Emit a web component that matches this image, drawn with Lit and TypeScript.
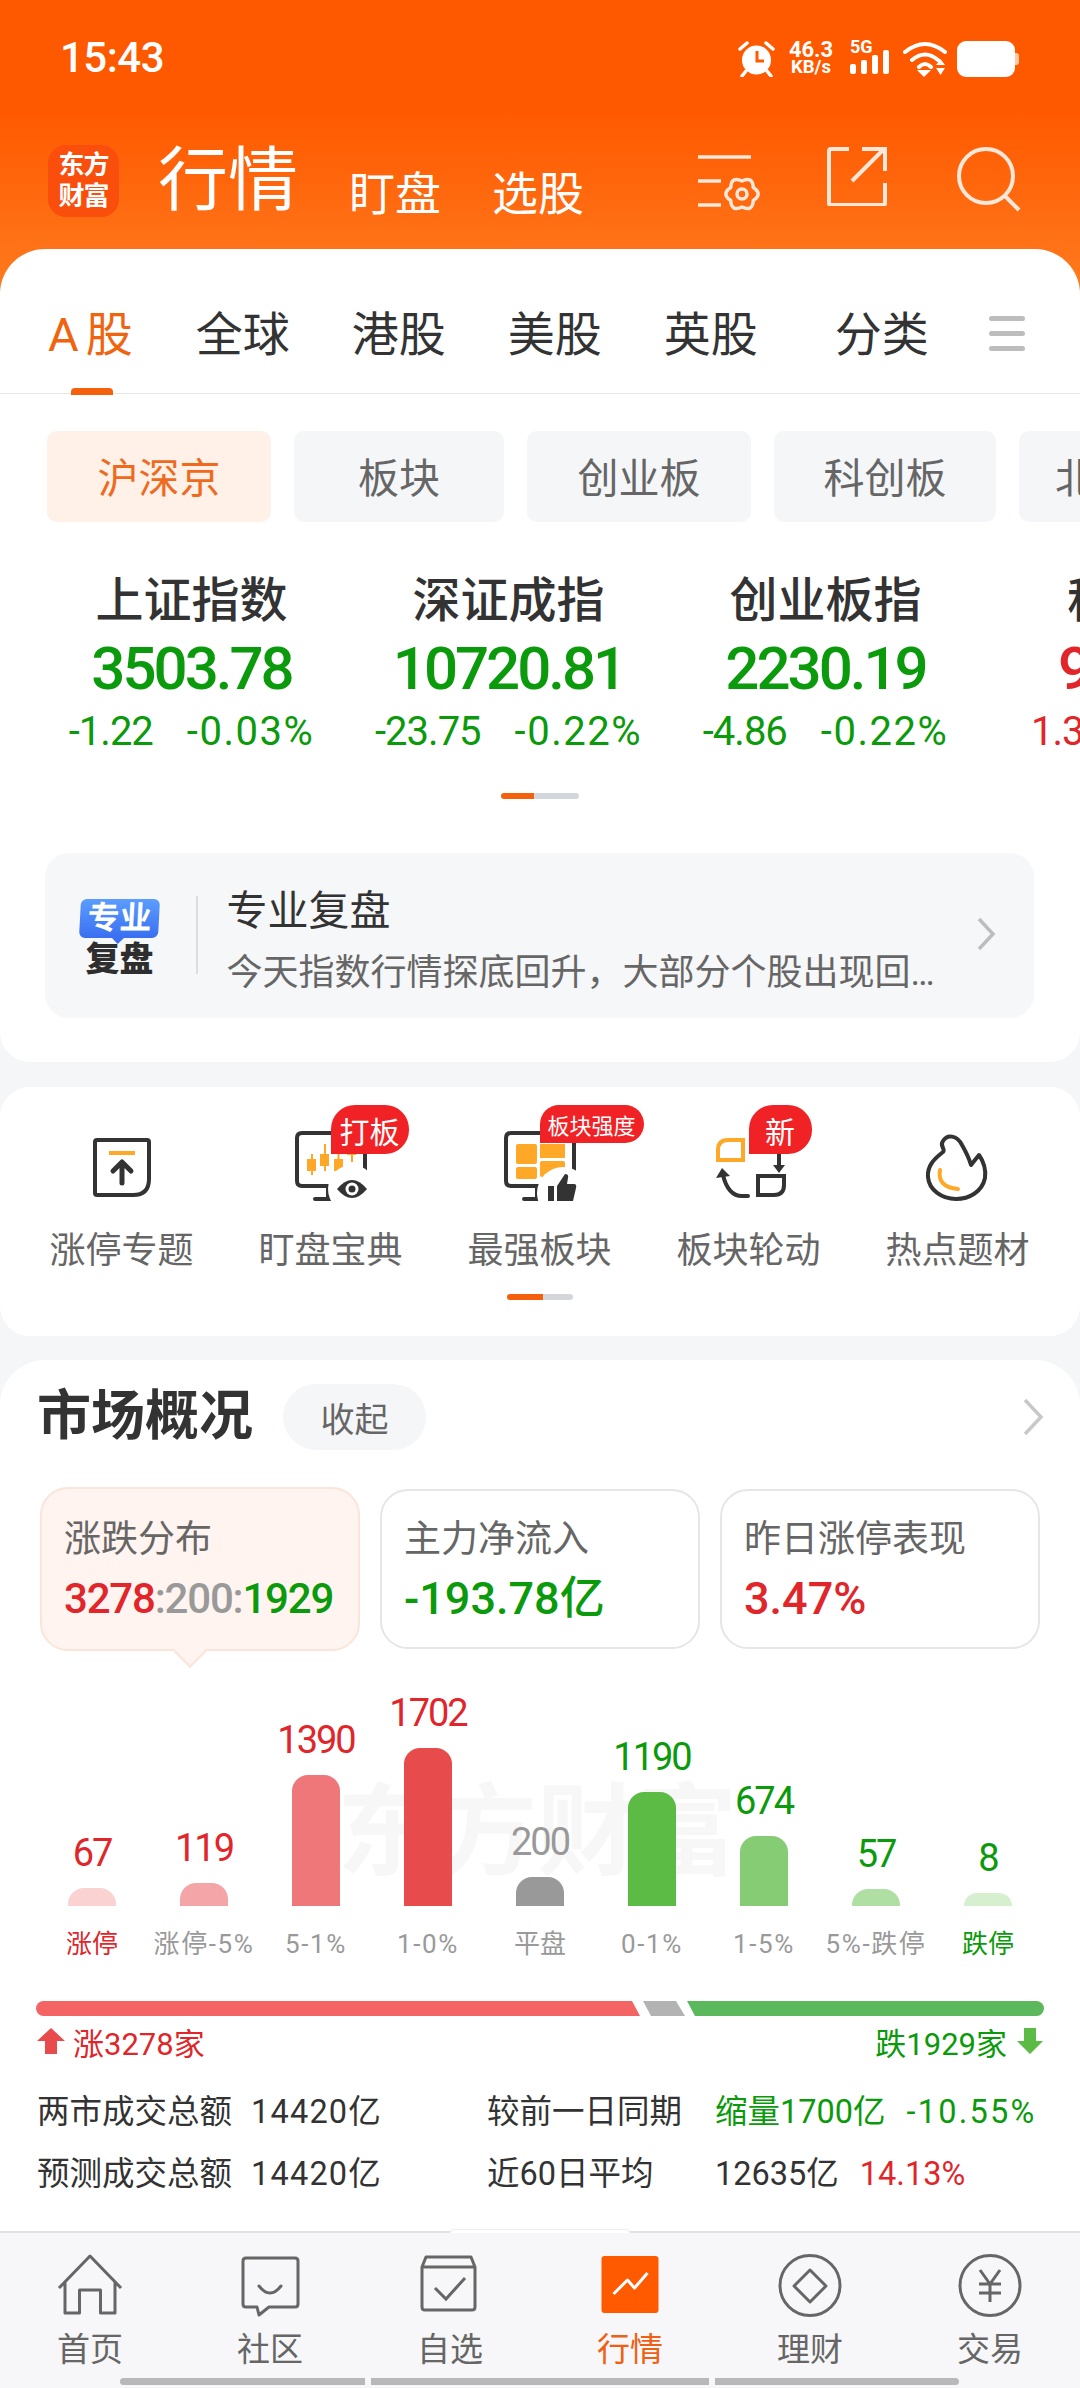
import { LitElement, html, css, svg } from "lit";
import { customElement } from "lit/decorators.js";

const gearPath = (cx: number, cy: number, rIn: number, rOut: number, n = 6) => {
  let d = "";
  for (let i = 0; i < n; i++) {
    const a0 = (i / n) * Math.PI * 2 - Math.PI / 2;
    const a1 = ((i + 1) / n) * Math.PI * 2 - Math.PI / 2;
    const am = (a0 + a1) / 2;
    const p = (a: number, r: number) => `${(cx + Math.cos(a) * r).toFixed(1)},${(cy + Math.sin(a) * r).toFixed(1)}`;
    if (i === 0) d += `M${p(a0, rIn)}`;
    d += `Q${p(am, rOut)} ${p(a1, rIn)}`;
  }
  return d + "Z";
};

const bars = [
  { v: "67", h: 18, c: "#FBD2D2", t: "r", l: "涨停", lc: "r" },
  { v: "119", h: 23, c: "#F4A5A7", t: "r", l: "涨停-5%", lc: "ln" },
  { v: "1390", h: 131, c: "#EF7779", t: "r", l: "5-1%", lc: "ln" },
  { v: "1702", h: 158, c: "#E84B4B", t: "r", l: "1-0%", lc: "ln" },
  { v: "200", h: 29, c: "#999999", t: "n", l: "平盘", lc: "" },
  { v: "1190", h: 114, c: "#5CBB45", t: "g", l: "0-1%", lc: "ln" },
  { v: "674", h: 70, c: "#85CC75", t: "g", l: "1-5%", lc: "ln" },
  { v: "57", h: 17, c: "#AFDFA2", t: "g", l: "5%-跌停", lc: "ln" },
  { v: "8", h: 13, c: "#D5EFCF", t: "g", l: "跌停", lc: "g" },
];

const indices = [
  { n: "上证指数", p: "3503.78", a: "-1.22", b: "-0.03%", c: "g" },
  { n: "深证成指", p: "10720.81", a: "-23.75", b: "-0.22%", c: "g" },
  { n: "创业板指", p: "2230.19", a: "-4.86", b: "-0.22%", c: "g" },
  { n: "科创50", p: "985.16", a: "1.36", b: "0.14%", c: "r" },
];

const iconUp = svg`
  <path d="M40,35 H90 Q92,35 92,37 V74 Q92,90 76,90 H40 Q38,90 38,88 V37 Q38,35 40,35 Z" fill="none" stroke="#333" stroke-width="4"/>
  <path d="M52,48 H78" stroke="#FFA726" stroke-width="4"/>
  <path d="M65,78 V58 M56,66 L65,57 L74,66" fill="none" stroke="#333" stroke-width="5" stroke-linecap="round" stroke-linejoin="round"/>`;

const monitor = svg`
  <path d="M104,28 H36 Q31,28 31,33 V76 Q31,81 36,81 H100" fill="none" stroke="#333" stroke-width="4"/>
  <path d="M99,28 V81" stroke="#333" stroke-width="4"/>
  <path d="M62,81 V94 M49,94 H76" fill="none" stroke="#333" stroke-width="4" stroke-linecap="round"/>`;

const iconWatch = svg`
  ${monitor}
  <g fill="#FFA726">
    <rect x="41" y="54" width="9" height="12"/><rect x="45" y="49" width="2" height="21"/>
    <rect x="54" y="49" width="9" height="12"/><rect x="58" y="39" width="2" height="27"/>
    <rect x="68" y="54" width="9" height="12"/><rect x="71.5" y="48" width="2" height="23"/>
    <rect x="81" y="45" width="9" height="5"/><rect x="85" y="45" width="2" height="12"/>
  </g>
  <circle cx="86" cy="84" r="24" fill="#fff"/>
  <path d="M71,84 Q86,66 101,84 Q86,102 71,84 Z" fill="#333"/>
  <circle cx="86" cy="84" r="6.5" fill="#fff"/><circle cx="86" cy="84" r="3.5" fill="#333"/>`;

const iconStrong = svg`
  ${monitor}
  <g fill="#FFA726">
    <rect x="41" y="39" width="21" height="20" rx="2"/><rect x="41" y="62" width="21" height="12" rx="2"/>
    <rect x="65" y="39" width="25" height="14"/><rect x="65" y="56" width="25" height="16" rx="2"/>
  </g>
  <circle cx="88" cy="88" r="26" fill="#fff"/>
  <path d="M73,81 H79 V96 H73 Z M82,81 L90,69 Q94,69 93,73 L92,79 H99 Q102,79 101,83 L98,96 H82 Z" fill="#333"/>`;

const iconRotate = svg`
  <path d="M44,35 H59 V55 H34 V45 Q34,35 44,35 Z" fill="none" stroke="#FFA726" stroke-width="4"/>
  <path d="M74,71 H100 V80 Q100,90 90,90 H74 Z" fill="none" stroke="#333" stroke-width="4"/>
  <path d="M95,48 V60" stroke="#333" stroke-width="4"/>
  <path d="M89,60 H101 L95,68 Z" fill="#333"/>
  <path d="M64,91 H58 Q44,91 39,70" fill="none" stroke="#333" stroke-width="4" stroke-linecap="round"/>
  <path d="M32,73 L38,63 L46,71 Z" fill="#333"/>`;

const iconFlame = svg`
  <path d="M50,36 C54,29 64,30 69,40 C73,47 76,53 78,60 L86,50 C91,57 93,65 92,73 C89,87 76,94 63,94 C49,94 36,85 35,72 C34,61 41,54 50,47 C53,44 46,41 50,36 Z" fill="none" stroke="#333" stroke-width="4" stroke-linejoin="round"/>
  <path d="M47,65 Q44,82 65,84" fill="none" stroke="#FFA726" stroke-width="4" stroke-linecap="round"/>`;

const tools = [
  { i: iconUp, l: "涨停专题", b: "" },
  { i: iconWatch, l: "盯盘宝典", b: "打板", k: "a" },
  { i: iconStrong, l: "最强板块", b: "板块强度", k: "b" },
  { i: iconRotate, l: "板块轮动", b: "新", k: "c" },
  { i: iconFlame, l: "热点题材", b: "" },
];

const tabIcons = [
  { l: "首页", i: svg`<path d="M4,35 L35,3 L66,35 M10,28 V60 H24.5 V37 H45.5 V60 H60 V28" fill="none" stroke="#666" stroke-width="3" stroke-linejoin="round"/>` },
  { l: "社区", i: svg`<path d="M11,5 H60 Q63,5 63,8 V51 Q63,54 60,54 H34 L24,62 L22,54 H11 Q8,54 8,51 V8 Q8,5 11,5 Z" fill="none" stroke="#666" stroke-width="3" stroke-linejoin="round"/><path d="M24,33 Q35,47 46,33" fill="none" stroke="#666" stroke-width="3" stroke-linecap="round"/>` },
  { l: "自选", i: svg`<path d="M7,14 L11,4 H56 L60,14 V54 Q60,57 57,57 H10 Q7,57 7,54 Z M7,14 H60" fill="none" stroke="#666" stroke-width="3" stroke-linejoin="round"/><path d="M20,35 L31,46 L50,25" fill="none" stroke="#666" stroke-width="3"/>` },
  { l: "行情", on: true, i: svg`<rect x="6.5" y="3" width="57" height="57" rx="3" fill="#FF5A00"/><path d="M18.5,41 L32.5,27 L39.5,35 L52.5,20" fill="none" stroke="#fff" stroke-width="3" stroke-linejoin="round"/>` },
  { l: "理财", i: svg`<circle cx="35" cy="32.5" r="30" fill="none" stroke="#666" stroke-width="3"/><path d="M35,17 L51,33 L35,49 L19,33 Z" fill="none" stroke="#666" stroke-width="3" stroke-linejoin="round"/>` },
  { l: "交易", i: svg`<circle cx="35" cy="32.5" r="30" fill="none" stroke="#666" stroke-width="3"/><path d="M25,17 L35,31 L45,17 M24,31 H46 M24,40 H46 M35,31 V49" fill="none" stroke="#666" stroke-width="3"/>` },
];

@customElement("app-root")
export class AppRoot extends LitElement {
  static styles = css`
    :host { display: block; width: 1080px; height: 2388px; font-family: Roboto, "Noto Sans CJK SC", sans-serif; color: #333; }
    * { box-sizing: border-box; }
    svg { display: block; flex: none; }
    .app { width: 1080px; height: 2388px; display: flex; flex-direction: column; overflow: hidden; background: #F5F6F8; }
    .scroll { flex: 1; min-height: 0; overflow: hidden; background: linear-gradient(#FF5900 0, #FF5900 110px, #FF7A1E 290px) 0 0 / 100% 300px no-repeat, #F5F6F8; }

    .status { height: 119px; display: flex; align-items: flex-start; padding: 38px 60px 0 60px; color: #fff; }
    .time { font-size: 42px; font-weight: 500; line-height: 40px; width: 678px; letter-spacing: -0.5px; }
    .alarm { margin-top: 3px; margin-left: 0; }
    .speed { width: 50px; margin-left: 11px; margin-top: 2px; text-align: center; font-weight: 700; white-space: nowrap; }
    .speed div:first-child { font-size: 22px; line-height: 19px; }
    .speed div:last-child { font-size: 18.5px; line-height: 17px; }
    .sig { width: 42px; margin-left: 14px; margin-top: 2px; }
    .sig span { display: block; font-size: 18px; font-weight: 700; line-height: 14px; }
    .sig svg { margin-top: -4px; }
    .wifi { margin-left: 11px; margin-top: 3px; }
    .batt { margin-left: 10px; margin-top: 3px; }

    .nav { height: 130px; display: flex; align-items: flex-start; padding-left: 48px; color: #fff; }
    .logo { width: 71px; height: 72px; margin-top: 26px; border-radius: 18px; background: #F94E0C; font-size: 26px; font-weight: 700; line-height: 31px; text-align: center; padding-top: 5px; letter-spacing: -1px; }
    .hq { font-size: 70px; line-height: 80px; margin-left: 39px; margin-top: 22px; }
    .sub-nav { font-size: 46px; line-height: 56px; margin-top: 47px; }
    .sub-nav.a { margin-left: 51px; }
    .sub-nav.b { margin-left: 51px; }
    .nav-ic { margin-top: 27px; }
    .nav-ic.a { margin-left: 113px; }
    .nav-ic.b { margin-left: 66px; }
    .nav-ic.c { margin-left: 69px; }

    .card { background: #fff; border-radius: 30px; overflow: hidden; }
    .market { border-radius: 45px 45px 30px 30px; padding-bottom: 44px; }
    .tabs { height: 145px; display: flex; align-items: flex-start; padding: 62px 0 0 48px; border-bottom: 1.5px solid #E6E6E6; position: relative; font-size: 47px; line-height: 48px; }
    .tabs span { margin-right: 62px; }
    .tabs .on { color: #F0640F; position: relative; margin-right: 56px; letter-spacing: 7px; }
    .tabs .on::after { content: ""; position: absolute; left: 23px; top: 77px; width: 42px; height: 7px; border-radius: 4px 4px 0 0; background: #F4600C; }
    .tabs .last { margin-left: 15px; margin-right: 60px; }
    .menu { display: flex; flex-direction: column; gap: 10px; width: 36px; margin-top: 5px; }
    .menu i { display: block; height: 5px; border-radius: 3px; background: #BDBDBD; }

    .chips { display: flex; gap: 23px; padding: 37px 0 0 47px; overflow: hidden; white-space: nowrap; }
    .chip { flex: none; height: 91px; border-radius: 10px; background: #F5F6F8; color: #666; font-size: 41px; display: flex; align-items: center; justify-content: center; padding-bottom: 4px; }
    .chip.on { background: #FFF0E8; color: #EE6A1E; }

    .idx { display: flex; padding: 50px 0 0 33px; width: 1080px; overflow: hidden; }
    .col { flex: none; width: 317px; display: flex; flex-direction: column; align-items: center; white-space: nowrap; }
    .col .n { font-size: 48px; line-height: 58px; font-weight: 500; }
    .col .p { font-size: 60px; line-height: 68px; margin-top: 5px; font-weight: 500; letter-spacing: -3px; }
    .col .s { display: flex; gap: 34px; font-size: 40px; line-height: 44px; margin-top: 7px; }
    .col .s span:first-child { letter-spacing: -1px; }
    .col .s span:last-child { letter-spacing: 1.5px; }
    .g { color: #0B9A0B; }
    .r { color: #E0262A; }
    .n0 { color: #999; }

    .dots { display: flex; justify-content: center; margin-top: 39px; }
    .dots.sm { margin-top: 21px; }
    .dots i { display: block; height: 6px; }
    .dots .o { background: #F4600C; border-radius: 3px 0 0 3px; }
    .dots .y { background: #D3D6DA; border-radius: 0 3px 3px 0; }
    .dots .w33 { width: 33px; } .dots .w45 { width: 45px; } .dots .w36 { width: 36px; } .dots .w30 { width: 30px; }

    .review { margin: 54px 46px 0 45px; height: 165px; border-radius: 24px; background: #F6F7F9; display: flex; align-items: flex-start; padding-left: 35px; position: relative; }
    .rlogo { width: 79px; margin-top: 46px; text-align: center; }
    .bubble { height: 39px; border-radius: 6px; background: linear-gradient(#5C9DFF, #3A6FF0); color: #fff; font-size: 32px; font-weight: 700; line-height: 38px; position: relative; transform: skewX(-3deg); }
    .bubble::after { content: ""; position: absolute; left: 33px; top: 39px; border: 6px solid transparent; border-top-color: #3A6FF0; border-bottom: 0; }
    .rlogo .fp { font-size: 34px; line-height: 36px; font-weight: 900; margin-top: 3px; color: #2E2E2E; white-space: nowrap; }
    .rdiv { width: 1.5px; height: 78px; background: #DDDDE0; margin: 43px 29px 0 37px; }
    .rtext { padding-top: 33px; white-space: nowrap; }
    .rtext .t { font-size: 41px; line-height: 50px; }
    .rtext .d { font-size: 36px; line-height: 50px; margin-top: 12px; color: #666; }
    .rchev { margin-left: auto; margin-right: 38px; margin-top: 64px; }

    .toolcard { margin-top: 25px; height: 249px; padding-top: 18px; }
    .tools { display: grid; grid-template-columns: repeat(5, 209px); padding-left: 17px; }
    .tool { display: flex; flex-direction: column; align-items: center; }
    .ticon { position: relative; width: 130px; height: 96px; }
    .badge { position: absolute; top: 0; background: #F02226; color: #fff; display: flex; align-items: center; justify-content: center; border-radius: 24px 24px 24px 0; white-space: nowrap; }
    .badge.a { left: 65px; width: 78px; height: 49px; font-size: 30px; }
    .badge.b { left: 65px; width: 104px; height: 38px; font-size: 22px; border-radius: 19px 19px 19px 0; }
    .badge.c { left: 65px; width: 63px; height: 49px; font-size: 30px; }
    .tool .l { font-size: 36px; line-height: 44px; margin-top: 28px; color: #666; white-space: nowrap; }

    .overview { margin-top: 24px; border-radius: 45px 45px 0 0; height: 900px; }
    .ohead { display: flex; align-items: center; padding: 24px 0 0 37px; height: 90px; }
    .ohead h2 { margin: 0; font-size: 54px; font-weight: 700; line-height: 66px; }
    .pill { margin-left: 30px; width: 143px; height: 66px; border-radius: 33px; background: #F5F6F8; color: #666; font-size: 34px; display: flex; align-items: center; justify-content: center; }
    .ochev { margin-left: auto; margin-right: 36px; }
    .mtabs { display: grid; grid-template-columns: repeat(3, 1fr); gap: 20px; padding: 0 40px; margin-top: 37px; align-items: center; }
    .mtab { height: 160px; border: 2px solid #E6E6E8; border-radius: 28px; padding: 27px 0 0 22px; white-space: nowrap; position: relative; }
    .mtab.on { height: 164px; padding-top: 29px; background: #FFF4EF; border-color: #FBE4D9; }
    .mtab.on::after { content: ""; position: absolute; left: 136px; bottom: -14px; width: 22px; height: 22px; background: #FFF4EF; border-right: 2px solid #FBE4D9; border-bottom: 2px solid #FBE4D9; transform: rotate(45deg); }
    .mtab .lb { font-size: 37px; line-height: 44px; color: #666; }
    .mtab .vl { font-size: 45px; line-height: 50px; margin-top: 12px; font-weight: 500; }
    .mtab.on .vl { font-size: 42px; letter-spacing: -1.2px; font-weight: 500; }

    .chartwrap { position: relative; margin-top: 39px; }
    .wm { position: absolute; left: 337px; top: 83px; font-size: 100px; line-height: 120px; color: #F7F7F7; font-weight: 700; white-space: nowrap; }
    .chart, .labels { display: grid; grid-template-columns: repeat(9, 112px); padding: 0 36px; position: relative; }
    .chart { height: 216px; align-items: end; }
    .bc { display: flex; flex-direction: column; align-items: center; }
    .bc .v { font-size: 38px; line-height: 44px; margin-bottom: 13px; letter-spacing: -2px; }
    .bc .b { width: 48px; border-radius: 16px 16px 0 0; }
    .labels { margin-top: 20px; font-size: 26px; line-height: 36px; color: #999; text-align: center; white-space: nowrap; }
    .labels .ln { letter-spacing: 1.6px; }

    .prog { display: flex; margin: 39px 36px 0; height: 15px; }
    .prog i { display: block; height: 15px; }
    .prog .pr { width: 604px; background: #F46464; border-radius: 8px 0 0 8px; clip-path: polygon(0 0, calc(100% - 8px) 0, 100% 100%, 0 100%); }
    .prog .pn { width: 42px; margin-left: 3px; background: #B3B3B3; clip-path: polygon(0 0, calc(100% - 9px) 0, 100% 100%, 8px 100%); }
    .prog .pg { width: 357px; margin-left: 2px; background: #5CB85C; border-radius: 0 8px 8px 0; clip-path: polygon(0 0, 100% 0, 100% 100%, 8px 100%); }

    .updown { display: flex; align-items: center; padding: 0 37px; margin-top: 5px; height: 40px; font-size: 31px; }
    .updown .sp { flex: 1; }
    .updown svg.u { margin-right: 8px; }
    .updown svg.d { margin-left: 10px; }

    .stat { display: grid; grid-template-columns: 214px 236px 228px auto; padding-left: 37px; font-size: 32.5px; line-height: 44px; white-space: nowrap; }
    .stat.first { margin-top: 29px; }
    .stat.second { margin-top: 18px; }
    .stat .x { display: flex; gap: 21px; }
    .stat .w { letter-spacing: 1.2px; }
    .stat .pc { letter-spacing: 2.2px; }

    .tabbar { flex: none; height: 157px; background: #F7F7F9; border-top: 2px solid #E2E2E2; position: relative; padding-top: 20px; }
    .notch { position: absolute; left: 450px; top: -4px; width: 180px; height: 4px; border: 1px solid #EEE; border-bottom: 0; border-radius: 8px 8px 0 0; background: #fff; }
    .tbi { display: grid; grid-template-columns: repeat(6, 180px); }
    .tb { display: flex; flex-direction: column; align-items: center; color: #666; font-size: 33px; line-height: 40px; }
    .tb span { margin-top: 11px; }
    .tb.on { color: #EE6012; }
    .sb { display: flex; gap: 6px; margin: 8px 0 0 120px; }
    .sb i { display: block; height: 7px; background: #B8B8B8; }
    .sb .a { width: 245px; border-radius: 4px 0 0 4px; }
    .sb .b { width: 338px; }
    .sb .c { width: 244px; border-radius: 0 4px 4px 0; }
  `;

  render() {
    return html`
      <div class="app">
        <div class="scroll">
          <div class="status">
            <div class="time">15:43</div>
            <svg class="alarm" width="37" height="36" viewBox="0 0 37 36">
              <circle cx="18.5" cy="19" r="14.5" fill="#fff"/>
              <path d="M19,10 V20 H26" fill="none" stroke="#FF5A00" stroke-width="3"/>
              <path d="M2,8 L9,2 M35,8 L28,2 M8,30 L4,35 M29,30 L33,35" stroke="#fff" stroke-width="3.5" stroke-linecap="round"/>
            </svg>
            <div class="speed"><div>46.3</div><div>KB/s</div></div>
            <div class="sig"><span>5G</span>
              <svg width="40" height="24" viewBox="0 0 40 24" fill="#fff"><rect x="0" y="14" width="6" height="10" rx="2"/><rect x="11" y="10" width="6" height="14" rx="2"/><rect x="22" y="5" width="6" height="19" rx="2"/><rect x="33" y="0" width="6" height="24" rx="2"/></svg>
            </div>
            <svg class="wifi" width="44" height="36" viewBox="0 0 44 36">
              <path d="M2,11 Q22,-5 42,11 M9,19 Q22,8 35,19 M16,26 Q22,20 28,26" fill="none" stroke="#fff" stroke-width="4" stroke-linecap="round"/>
              <path d="M14,29 H28 L21,36 Z M33,24 H42 L37.5,18 Z M33,27 H42 L37.5,34 Z" fill="#fff"/>
            </svg>
            <svg class="batt" width="62" height="36" viewBox="0 0 62 36">
              <rect x="0" y="0" width="58" height="36" rx="9" fill="#fff"/>
              <path d="M58,12 H59 Q62,12 62,15 V21 Q62,24 59,24 H58 Z" fill="#FFC9A6"/>
            </svg>
          </div>
          <div class="nav">
            <div class="logo">东方<br />财富</div>
            <div class="hq">行情</div>
            <div class="sub-nav a">盯盘</div>
            <div class="sub-nav b">选股</div>
            <svg class="nav-ic a" width="64" height="66" viewBox="0 0 64 66" fill="none" stroke="#FFE8DA" stroke-width="3.5">
              <path d="M1,11 H54 M1,35 H24 M1,59 H24"/>
              <path d="${gearPath(45, 48, 13, 21)}" stroke-linejoin="round"/>
              <circle cx="45" cy="48" r="5"/>
            </svg>
            <svg class="nav-ic b" width="60" height="60" viewBox="0 0 60 60" fill="none" stroke="#FFE8DA" stroke-width="4">
              <path d="M22,3 H4 Q2,3 2,5 V57 Q2,59 4,59 H56 Q58,59 58,57 V37"/>
              <path d="M25,35 L57,3 M35,3 H58 V25"/>
            </svg>
            <svg class="nav-ic c" width="66" height="66" viewBox="0 0 66 66" fill="none" stroke="#FFE8DA" stroke-width="4">
              <circle cx="30" cy="30" r="27"/><path d="M49,50 L63,64"/>
            </svg>
          </div>

          <div class="card market">
            <div class="tabs">
              <span class="on">A股</span><span>全球</span><span>港股</span><span>美股</span><span>英股</span><span class="last">分类</span>
              <div class="menu"><i></i><i></i><i></i></div>
            </div>
            <div class="chips">
              <div class="chip on" style="width:224px">沪深京</div>
              <div class="chip" style="width:210px">板块</div>
              <div class="chip" style="width:224px">创业板</div>
              <div class="chip" style="width:222px">科创板</div>
              <div class="chip" style="width:200px">北证50</div>
            </div>
            <div class="idx">
              ${indices.map(
                (i) => html`<div class="col">
                  <div class="n">${i.n}</div>
                  <div class="p ${i.c}">${i.p}</div>
                  <div class="s ${i.c}"><span>${i.a}</span><span>${i.b}</span></div>
                </div>`
              )}
            </div>
            <div class="dots"><i class="o w33"></i><i class="y w45"></i></div>
            <div class="review">
              <div class="rlogo">
                <div class="bubble">专业</div>
                <div class="fp">复盘</div>
              </div>
              <div class="rdiv"></div>
              <div class="rtext">
                <div class="t">专业复盘</div>
                <div class="d">今天指数行情探底回升，大部分个股出现回…</div>
              </div>
              <svg class="rchev" width="20" height="34" viewBox="0 0 20 34" fill="none" stroke="#BDBDBD" stroke-width="3.5"><path d="M3,2 L17,17 L3,32"/></svg>
            </div>
          </div>

          <div class="card toolcard">
            <div class="tools">
              ${tools.map(
                (t) => html`<div class="tool">
                  <div class="ticon">
                    <svg width="130" height="96" viewBox="0 0 130 96">${t.i}</svg>
                    ${t.b ? html`<span class="badge ${t.k}">${t.b}</span>` : ""}
                  </div>
                  <div class="l">${t.l}</div>
                </div>`
              )}
            </div>
            <div class="dots sm"><i class="o w36"></i><i class="y w30"></i></div>
          </div>

          <div class="card overview">
            <div class="ohead">
              <h2>市场概况</h2>
              <div class="pill">收起</div>
              <svg class="ochev" width="22" height="38" viewBox="0 0 22 38" fill="none" stroke="#C8C8C8" stroke-width="3.5"><path d="M3,2 L19,19 L3,36"/></svg>
            </div>
            <div class="mtabs">
              <div class="mtab on"><div class="lb">涨跌分布</div><div class="vl"><span class="r">3278</span><span class="n0">:200:</span><span class="g">1929</span></div></div>
              <div class="mtab"><div class="lb">主力净流入</div><div class="vl g">-193.78亿</div></div>
              <div class="mtab"><div class="lb">昨日涨停表现</div><div class="vl r">3.47%</div></div>
            </div>
            <div class="chartwrap">
              <div class="wm">东方财富</div>
              <div class="chart">
                ${bars.map(
                  (b) => html`<div class="bc">
                    <div class="v ${b.t === "n" ? "n0" : b.t}">${b.v}</div>
                    <div class="b" style="height:${b.h}px;background:${b.c}"></div>
                  </div>`
                )}
              </div>
              <div class="labels">${bars.map((b) => html`<div class="${b.lc}">${b.l}</div>`)}</div>
            </div>
            <div class="prog"><i class="pr"></i><i class="pn"></i><i class="pg"></i></div>
            <div class="updown">
              <svg class="u" width="28" height="26" viewBox="0 0 28 26"><path d="M14,0 L28,13 H20 V26 H8 V13 H0 Z" fill="#E84B4B"/></svg>
              <span class="r">涨3278家</span>
              <span class="sp"></span>
              <span class="g">跌1929家</span>
              <svg class="d" width="26" height="26" viewBox="0 0 26 26"><path d="M13,26 L26,13 H19 V0 H7 V13 H0 Z" fill="#5CBB45"/></svg>
            </div>
            <div class="stat first">
              <span>两市成交总额</span><span class="w">14420亿</span><span>较前一日同期</span>
              <span class="x g"><span>缩量1700亿</span><span class="pc">-10.55%</span></span>
            </div>
            <div class="stat second">
              <span>预测成交总额</span><span class="w">14420亿</span><span>近60日平均</span>
              <span class="x"><span>12635亿</span><span class="r">14.13%</span></span>
            </div>
          </div>
        </div>

        <div class="tabbar">
          <div class="notch"></div>
          <div class="tbi">
            ${tabIcons.map(
              (t) => html`<div class="tb ${t.on ? "on" : ""}">
                <svg width="70" height="66" viewBox="0 0 70 66">${t.i}</svg>
                <span>${t.l}</span>
              </div>`
            )}
          </div>
          <div class="sb"><i class="a"></i><i class="b"></i><i class="c"></i></div>
        </div>
      </div>
    `;
  }
}
